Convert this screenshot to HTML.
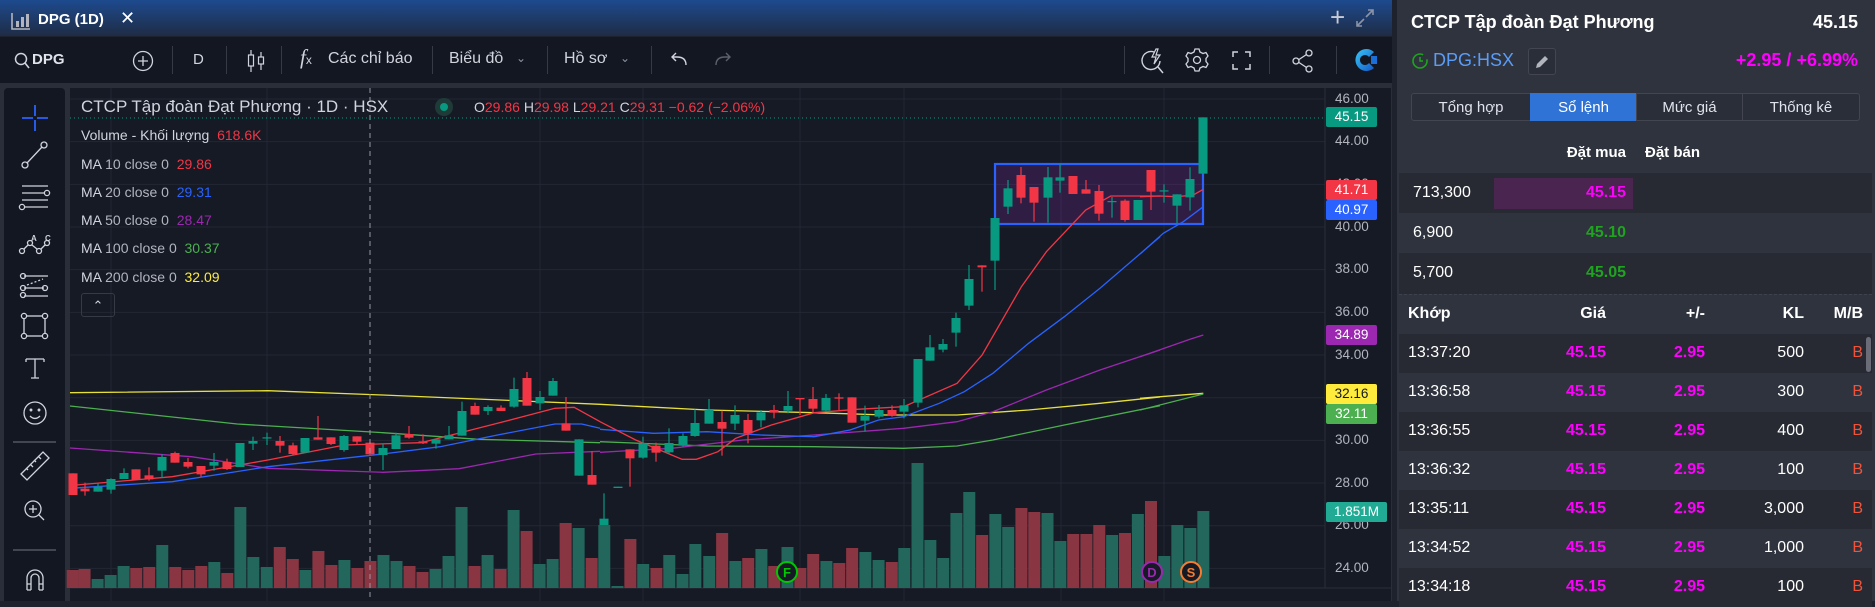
<!DOCTYPE html>
<html><head><meta charset="utf-8">
<style>
*{margin:0;padding:0;box-sizing:border-box}
body{width:1875px;height:601px;overflow:hidden;background:#1e222d;font-family:"Liberation Sans",sans-serif;position:relative;color:#d1d4dc}
.a{position:absolute;white-space:nowrap}
#title{left:0;top:0;width:1392px;height:36px;background:linear-gradient(#1d4a8e,#1f2c45)}
#tb{left:0;top:37px;width:1392px;height:46px;background:#131722}
#gap{left:0;top:83px;width:1392px;height:5px;background:#2a2e39}
#lb{left:4px;top:88px;width:61px;height:513px;background:#131722;border-radius:4px 4px 0 0}
#lbgap{left:0;top:88px;width:70px;height:513px;background:#2a2e39;z-index:-1}
#chart{left:70px;top:88px;width:1322px;height:513px;background:#161a25}
.tt{font-size:16px;color:#d1d4dc}
.div{width:1px;height:28px;background:#363a45;top:46px}
.lg{font-size:14px;color:#b2b5be}
.pl{left:1335px;font-size:13.5px;color:#b2b5be}
.tag{left:1326px;width:51px;height:20px;font-size:13.5px;text-align:center;line-height:20px;color:#fff;border-radius:2px}
#rp{left:1397px;top:0;width:478px;height:601px;background:#2f333d}
.rw{position:absolute;left:1399px;width:473px}
.d{background:#272a33}
.n{font-size:16px;color:#fff}
.b{font-weight:bold}
.mg{color:#f0f;font-weight:bold;font-size:16px}
.gr{color:#1ea51e;font-weight:bold;font-size:16px}
.tab{top:93px;height:28px;line-height:27px;text-align:center;font-size:15px;color:#e0e3eb;border:1px solid #434651;background:#2a2e39}
</style></head><body>
<div class="a" id="title"></div>
<svg class="a" style="left:11px;top:12px" width="20" height="18" viewBox="0 0 20 18"><path d="M1 1v16h18" stroke="#b2b5be" fill="none" stroke-width="1.6"/><rect x="5" y="9" width="3" height="6" fill="#b2b5be"/><rect x="10" y="5" width="3" height="10" fill="#b2b5be"/><rect x="15" y="2" width="3" height="13" fill="#b2b5be"/></svg>
<div class="a b" style="left:38px;top:11px;font-size:15px;color:#fff">DPG (1D)</div>
<div class="a" style="left:120px;top:8px;font-size:18px;color:#fff">✕</div>
<div class="a" style="left:1330px;top:2px;font-size:26px;color:#c7cbd6;font-weight:300">+</div>
<svg class="a" style="left:1356px;top:9px" width="18" height="18" viewBox="0 0 18 18"><path d="M10 8l7-7M12 1h5v5M8 10l-7 7M1 12v5h5" stroke="#8b93a6" stroke-width="1.6" fill="none"/></svg>

<div class="a" id="tb"></div>
<svg class="a" style="left:14px;top:52px" width="16" height="17"><circle cx="7" cy="7" r="5.5" stroke="#d1d4dc" stroke-width="1.5" fill="none"/><path d="M11 11l4 5" stroke="#d1d4dc" stroke-width="1.6"/></svg>
<div class="a b" style="left:32px;top:51px;font-size:15px;color:#e0e3eb">DPG</div>
<svg class="a" style="left:132px;top:50px" width="22" height="22"><circle cx="11" cy="11" r="9.5" stroke="#d1d4dc" stroke-width="1.3" fill="none"/><path d="M11 6v10M6 11h10" stroke="#d1d4dc" stroke-width="1.3"/></svg>
<div class="a div" style="left:172px"></div>
<div class="a" style="left:193px;top:51px;font-size:15px">D</div>
<div class="a div" style="left:226px"></div>
<svg class="a" style="left:246px;top:49px" width="20" height="24"><path d="M5 1v22M15 3v18" stroke="#d1d4dc" stroke-width="1.2"/><rect x="2.5" y="6" width="5" height="11" fill="#131722" stroke="#d1d4dc" stroke-width="1.2"/><rect x="12.5" y="8" width="5" height="7" fill="#131722" stroke="#d1d4dc" stroke-width="1.2"/></svg>
<div class="a div" style="left:281px"></div>
<div class="a" style="left:300px;top:45px;font-size:21px;font-family:'Liberation Serif',serif;font-style:italic">f<span style="font-size:12px;font-style:normal;font-family:'Liberation Sans'">x</span></div>
<div class="a tt" style="left:328px;top:50px">Các chỉ báo</div>
<div class="a div" style="left:432px"></div>
<div class="a tt" style="left:449px;top:50px">Biểu đồ</div>
<div class="a" style="left:516px;top:51px;font-size:12px;color:#8b93a6">⌄</div>
<div class="a div" style="left:547px"></div>
<div class="a tt" style="left:564px;top:50px">Hồ sơ</div>
<div class="a" style="left:620px;top:51px;font-size:12px;color:#8b93a6">⌄</div>
<div class="a div" style="left:651px"></div>
<svg class="a" style="left:670px;top:52px" width="18" height="14"><path d="M16 13c0-6-4-8-9-8H2M6 1L2 5l4 4" stroke="#d1d4dc" stroke-width="1.4" fill="none"/></svg>
<svg class="a" style="left:714px;top:52px" width="18" height="14"><path d="M2 13c0-6 4-8 9-8h5M12 1l4 4-4 4" stroke="#5d606b" stroke-width="1.4" fill="none"/></svg>
<div class="a div" style="left:1124px"></div>
<svg class="a" style="left:1140px;top:47px" width="26" height="28"><path d="M14 5a9 9 0 1 0 6 9" stroke="#d1d4dc" stroke-width="1.4" fill="none"/><path d="M18 20l5 6" stroke="#d1d4dc" stroke-width="1.5"/><path d="M16 2l-4 8h4l-2 7 6-9h-4l2-6z" stroke="#d1d4dc" stroke-width="1.2" fill="none"/></svg>
<svg class="a" style="left:1184px;top:47px" width="26" height="26" viewBox="0 0 26 26"><path d="M11 2h4l1 3 3 1.5 3-1 2 3.5-2 2.5v3l2 2.5-2 3.5-3-1-3 1.5-1 3h-4l-1-3-3-1.5-3 1-2-3.5 2-2.5v-3l-2-2.5 2-3.5 3 1L10 5z" stroke="#d1d4dc" stroke-width="1.3" fill="none"/><circle cx="13" cy="13" r="3.5" stroke="#d1d4dc" stroke-width="1.3" fill="none"/></svg>
<svg class="a" style="left:1232px;top:51px" width="19" height="19"><path d="M1 6V1h5M13 1h5v5M18 13v5h-5M6 18H1v-5" stroke="#d1d4dc" stroke-width="1.5" fill="none"/></svg>
<div class="a div" style="left:1269px"></div>
<svg class="a" style="left:1292px;top:49px" width="22" height="24"><circle cx="17" cy="4" r="3" stroke="#d1d4dc" stroke-width="1.3" fill="none"/><circle cx="4" cy="12" r="3" stroke="#d1d4dc" stroke-width="1.3" fill="none"/><circle cx="17" cy="20" r="3" stroke="#d1d4dc" stroke-width="1.3" fill="none"/><path d="M7 10.5l7.5-5M7 13.5l7.5 5" stroke="#d1d4dc" stroke-width="1.3"/></svg>
<div class="a div" style="left:1336px"></div>
<svg class="a" style="left:1354px;top:47px" width="26" height="26"><defs><linearGradient id="lg1" x1="0" y1="0" x2="1" y2="1"><stop offset="0" stop-color="#39c7f5"/><stop offset="1" stop-color="#1458c9"/></linearGradient></defs><path d="M20 5A11 11 0 1 0 20 21L15 16A5 5 0 1 1 15 10z" fill="url(#lg1)"/><path d="M17 9h6v8h-6z" fill="#1b6fd6"/></svg>
<div class="a" id="gap"></div>

<div class="a" id="lbgap"></div>
<div class="a" id="lb"></div>
<svg class="a" style="left:0;top:88px" width="70" height="513">
<g stroke="#d1d4dc" stroke-width="1.3" fill="none">
<path d="M35 17v11M35 32v11M22 30h11M37 30h11" stroke="#2962ff" stroke-width="1.8"/>
<circle cx="44" cy="57" r="3"/><circle cx="25" cy="77" r="3"/><path d="M27 75l15-16"/>
<path d="M22 98h26M22 105h22M22 112h26M24 119h24"/><circle cx="47" cy="105" r="2.6"/><circle cx="22" cy="119" r="2.6"/>
<circle cx="22" cy="163" r="2.5"/><circle cx="30" cy="155" r="2.5"/><circle cx="39" cy="163" r="2.5"/><circle cx="47" cy="155" r="2.5"/><path d="M24 161l4-4M32 157l5 4M41 161l4-4"/>
<path d="M24 188h24M24 200h20M24 208h24"/><path d="M27 197l16-6" stroke-dasharray="2 2"/><circle cx="23" cy="188" r="2.5"/><circle cx="23" cy="200" r="2.5"/><circle cx="45" cy="200" r="2.5"/><circle cx="23" cy="207" r="2.5"/>
<rect x="24" y="228" width="21" height="20"/><circle cx="24" cy="228" r="2.6" fill="#131722"/><circle cx="45" cy="228" r="2.6" fill="#131722"/><circle cx="24" cy="248" r="2.6" fill="#131722"/><circle cx="45" cy="248" r="2.6" fill="#131722"/>
<path d="M26 271h18M35 271v19M31 290h8M26 271v3M44 271v3"/>
<circle cx="35" cy="325" r="11"/><path d="M30 328q5 5 10 0"/><circle cx="31" cy="322" r=".8"/><circle cx="39" cy="322" r=".8"/>
<path d="M13 354h43" stroke="#434651" stroke-width="2"/>
<path d="M21 386l22-22 6 6-22 22z M26 380l2 2M30 376l3 3M34 372l2 2M38 368l3 3"/>
<circle cx="33" cy="421" r="8"/><path d="M39 427l5 5M33 417v8M29 421h8"/>
<path d="M13 462h43" stroke="#434651" stroke-width="2"/>
<path d="M27 502v-12a8 8 0 0 1 16 0v12M31 502v-12a4 4 0 0 1 8 0v12M27 496h4M39 496h4M27 502h4M39 502h4"/>
<text x="31" y="153" fill="#d1d4dc" stroke="none" font-size="8" font-weight="bold" font-family="Liberation Sans">A</text><text x="45" y="153" fill="#d1d4dc" stroke="none" font-size="8" font-weight="bold" font-family="Liberation Sans">C</text>
</g></svg>

<div class="a" id="chart"></div>
<svg class="a" id="cs" style="left:0;top:0" width="1392" height="601"></svg>

<div class="a" style="left:81px;top:97px;font-size:17px;color:#d1d4dc">CTCP Tập đoàn Đạt Phương · 1D · HSX</div>
<div class="a" style="left:435px;top:98px;width:18px;height:18px;border-radius:9px;background:#1f3b38"></div>
<div class="a" style="left:440px;top:103px;width:8px;height:8px;border-radius:4px;background:#089981"></div>
<div class="a" style="left:474px;top:99px;font-size:14px;color:#d1d4dc">O<span style="color:#f23645">29.86</span> H<span style="color:#f23645">29.98</span> L<span style="color:#f23645">29.21</span> C<span style="color:#f23645">29.31</span> <span style="color:#f23645">−0.62 (−2.06%)</span></div>
<div class="a lg" style="left:81px;top:127px;color:#d1d4dc">Volume - Khối lượng <span style="color:#f23645">&nbsp;618.6K</span></div>
<div class="a lg" style="left:81px;top:156px"><span style="color:#d1d4dc">MA</span> 10 close 0 &nbsp;<span style="color:#f23645">29.86</span></div>
<div class="a lg" style="left:81px;top:184px"><span style="color:#d1d4dc">MA</span> 20 close 0 &nbsp;<span style="color:#2962ff">29.31</span></div>
<div class="a lg" style="left:81px;top:212px"><span style="color:#d1d4dc">MA</span> 50 close 0 &nbsp;<span style="color:#9c27b0">28.47</span></div>
<div class="a lg" style="left:81px;top:240px"><span style="color:#d1d4dc">MA</span> 100 close 0 &nbsp;<span style="color:#4caf50">30.37</span></div>
<div class="a lg" style="left:81px;top:269px"><span style="color:#d1d4dc">MA</span> 200 close 0 &nbsp;<span style="color:#ffeb3b">32.09</span></div>
<div class="a" style="left:81px;top:293px;width:34px;height:24px;border:1px solid #363a45;border-radius:3px;text-align:center;font-size:13px;line-height:24px;color:#d1d4dc">⌃</div>

<div class="a pl" style="top:91px">46.00</div>
<div class="a pl" style="top:133px">44.00</div>
<div class="a pl" style="top:176px">42.00</div>
<div class="a pl" style="top:219px">40.00</div>
<div class="a pl" style="top:261px">38.00</div>
<div class="a pl" style="top:304px">36.00</div>
<div class="a pl" style="top:347px">34.00</div>
<div class="a pl" style="top:389px">32.00</div>
<div class="a pl" style="top:432px">30.00</div>
<div class="a pl" style="top:475px">28.00</div>
<div class="a pl" style="top:517px">26.00</div>
<div class="a pl" style="top:560px">24.00</div>
<div class="a tag" style="top:107px;background:#089981">45.15</div>
<div class="a tag" style="top:180px;background:#f23645">41.71</div>
<div class="a tag" style="top:200px;background:#2962ff">40.97</div>
<div class="a tag" style="top:325px;background:#9c27b0">34.89</div>
<div class="a tag" style="top:384px;background:#ffeb3b;color:#131722">32.16</div>
<div class="a tag" style="top:404px;background:#4caf50">32.11</div>
<div class="a tag" style="top:502px;width:61px;background:#22ab94">1.851M</div>

<div class="a" id="rp"></div>
<div class="a b" style="left:1411px;top:12px;font-size:18px;color:#fff">CTCP Tập đoàn Đạt Phương</div>
<div class="a b" style="left:1800px;top:12px;width:58px;text-align:right;font-size:18px;color:#fff">45.15</div>
<svg class="a" style="left:1411px;top:51px" width="18" height="20"><circle cx="9" cy="10" r="7" stroke="#1ea51e" stroke-width="1.6" fill="none" stroke-dasharray="36 6"/><path d="M9 6v4h3" stroke="#1ea51e" stroke-width="1.5" fill="none"/></svg>
<div class="a" style="left:1433px;top:50px;font-size:18px;color:#5b9cf6">DPG:HSX</div>
<div class="a" style="left:1528px;top:48px;width:28px;height:27px;border:1px solid #434651;border-radius:3px;background:#2a2e39"></div>
<svg class="a" style="left:1534px;top:54px" width="16" height="16"><path d="M2 14l1-4 8-8 3 3-8 8z" fill="#b2b5be"/></svg>
<div class="a b" style="left:1680px;top:50px;width:178px;text-align:right;font-size:18px;color:#f0f">+2.95 / +6.99%</div>
<div class="a tab" style="left:1411px;width:120px;border-radius:3px 0 0 3px">Tổng hợp</div>
<div class="a tab" style="left:1530px;width:107px;background:#2f73d6;border-color:#2f73d6;color:#fff">Sổ lệnh</div>
<div class="a tab" style="left:1636px;width:107px">Mức giá</div>
<div class="a tab" style="left:1742px;width:118px;border-radius:0 3px 3px 0">Thống kê</div>
<div class="a b" style="left:1500px;top:144px;width:126px;text-align:right;font-size:15px;color:#fff">Đặt mua</div>
<div class="a b" style="left:1645px;top:144px;font-size:15px;color:#fff">Đặt bán</div>
<div class="rw d" style="top:173px;height:40px"></div>
<div class="rw" style="top:213px;height:40px"></div>
<div class="rw d" style="top:253px;height:41px"></div>
<div class="a" style="left:1494px;top:178px;width:139px;height:31px;background:#4a2550"></div>
<div class="a n" style="left:1413px;top:184px">713,300</div><div class="a mg" style="left:1540px;top:184px;width:86px;text-align:right">45.15</div>
<div class="a n" style="left:1413px;top:224px">6,900</div><div class="a gr" style="left:1540px;top:224px;width:86px;text-align:right">45.10</div>
<div class="a n" style="left:1413px;top:264px">5,700</div><div class="a gr" style="left:1540px;top:264px;width:86px;text-align:right">45.05</div>
<div class="a" style="left:1399px;top:294px;width:473px;border-top:1px dashed #3e424d"></div>
<div class="a b" style="left:1408px;top:305px;font-size:16px;color:#fff">Khớp</div>
<div class="a b" style="left:1540px;top:305px;width:66px;text-align:right;font-size:16px;color:#fff">Giá</div>
<div class="a b" style="left:1640px;top:305px;width:65px;text-align:right;font-size:16px;color:#fff">+/-</div>
<div class="a b" style="left:1740px;top:305px;width:64px;text-align:right;font-size:16px;color:#fff">KL</div>
<div class="a b" style="left:1820px;top:305px;width:43px;text-align:right;font-size:16px;color:#fff">M/B</div>
<div id="trades"></div>
<div class="a" style="left:1866px;top:337px;width:5px;height:35px;border-radius:3px;background:#6a6d78"></div>

<script>
var NS="http://www.w3.org/2000/svg",svg=document.getElementById('cs');
function el(t,a){var e=document.createElementNS(NS,t);for(var k in a)e.setAttribute(k,a[k]);svg.appendChild(e);return e}
// grid
for(var i=0;i<12;i++){var y=99+i*42.67;el('line',{x1:70,x2:1325,y1:y,y2:y,stroke:'#232734','stroke-width':1})}
[111,267,540,643,800,904,1061,1164].forEach(function(x){el('line',{x1:x,x2:x,y1:88,y2:601,stroke:'#232734'})});
el('line',{x1:1325,x2:1325,y1:88,y2:588,stroke:'#2a2e39'});
el('line',{x1:70,x2:1392,y1:588,y2:588,stroke:'#2a2e39'});
el('line',{x1:1392,x2:1392,y1:88,y2:601,stroke:'#2a2e39','stroke-width':2});
function T5(p){return [p[0]/2.613,250+p[1]/3]}
function T6(p){return [600+p[0]/2.8,120+p[1]/3]}
function T7(p){return [1140+p[0]/3,90+p[1]/3]}
// box
el('rect',{x:995,y:164,width:208,height:60,fill:'rgba(120,40,150,0.28)',stroke:'#2962ff','stroke-width':2.2});
var V5=[[190,960,'r'],[221,957,'r'],[255,987,'g'],[289,975,'g'],[323,948,'g'],[356,954,'r'],[390,951,'r'],[424,885,'g'],[458,951,'r'],[492,960,'r'],[526,948,'r'],[560,936,'g'],[594,969,'r'],[628,771,'g'],[662,921,'g'],[697,951,'g'],[731,891,'r'],[765,927,'r'],[798,960,'g'],[832,903,'r'],[866,945,'r'],[900,930,'g'],[934,954,'r'],[968,933,'r'],[1002,915,'g'],[1036,933,'g'],[1070,948,'r'],[1104,966,'r'],[1138,957,'g'],[1172,918,'g'],[1206,771,'g'],[1240,948,'r'],[1274,915,'g'],[1308,957,'r'],[1342,780,'g'],[1376,843,'r'],[1410,942,'g'],[1444,927,'g'],[1478,819,'r'],[1512,834,'g'],[1546,924,'r']];
var V6=[[12,1215,'g'],[49,1398,'g'],[85,1257,'r'],[121,1332,'g'],[158,1344,'r'],[194,1305,'g'],[231,1362,'g'],[267,1272,'g'],[306,1308,'g'],[342,1239,'r'],[379,1323,'g'],[415,1314,'r'],[452,1287,'g'],[488,1338,'r'],[525,1281,'g'],[561,1344,'r'],[597,1302,'r'],[634,1323,'g'],[670,1329,'r'],[706,1284,'r'],[743,1296,'g'],[780,1320,'g'],[817,1326,'r'],[852,1284,'g'],[889,1029,'g'],[925,1260,'g'],[961,1314,'g'],[998,1179,'g'],[1034,1116,'g'],[1070,1245,'r'],[1107,1182,'g'],[1143,1221,'g'],[1180,1164,'r'],[1216,1176,'r'],[1253,1179,'g'],[1289,1263,'g'],[1325,1242,'r'],[1362,1242,'r'],[1398,1215,'r'],[1434,1245,'g'],[1470,1239,'r'],[1506,1182,'g']];
var V7=[[33,1233,'r'],[73,1398,'g'],[112,1305,'g'],[151,1314,'g'],[190,1263,'g']];
function vol(arr,T){arr.forEach(function(v){var p=T([v[0],v[1]]);var top=Math.max(p[1],0);el('rect',{x:p[0]-6,y:top,width:12,height:588-top,fill:v[2]=='g'?'#22665c':'#8a3642'})})}
vol(V5,T5);vol(V6,T6);vol(V7,T7);
// MAs
function line(pts,T,c){var d=pts.map(function(p,i){var q=T(p);return (i?'L':'M')+q[0].toFixed(1)+' '+q[1].toFixed(1)}).join('');el('path',{d:d,stroke:c,fill:'none','stroke-width':1.3})}
var Y='#e8e03a',G='#4caf50',P='#9c27b0',B='#2962ff',R='#f23645';
line([[183,428],[700,422],[1000,435],[1568,463]],T5,Y);line([[0,853],[300,870],[600,878],[800,885],[1000,885],[1200,870],[1400,850],[1568,831]],T6,Y);line([[0,925],[190,910]],T7,Y);
line([[183,468],[620,522],[1000,548],[1250,568],[1568,578]],T5,G);line([[0,965],[300,978],[600,980],[850,985],[1000,978],[1100,960],[1300,915],[1568,857]],T6,G);line([[0,960],[190,912]],T7,G);
line([[183,594],[500,620],[700,655],[1000,667],[1200,656],[1400,612],[1568,604]],T5,P);line([[0,997],[200,985],[400,960],[600,945],[850,925],[1000,905],[1100,875],[1250,810],[1400,750],[1568,690]],T6,P);line([[0,800],[150,748],[190,735]],T7,P);
line([[183,715],[450,695],[700,650],[1000,612],[1150,590],[1300,555],[1450,522],[1520,522],[1568,535]],T5,B);line([[0,928],[150,940],[300,935],[450,945],[600,950],[700,930],[780,900],[850,890],[950,850],[1020,815],[1100,760],[1200,670],[1300,590],[1400,505],[1568,350]],T6,B);line([[0,492],[70,430],[130,395],[190,350]],T7,B);
line([[200,705],[450,680],[700,630],[900,585],[1100,578],[1300,520],[1450,475],[1500,472],[1568,515]],T5,R);line([[0,905],[100,960],[230,1018],[270,1018],[330,995],[380,955],[480,915],[600,878],[720,868],[850,860],[1000,790],[1070,705],[1180,500],[1250,395],[1360,270],[1430,228],[1568,228]],T6,R);line([[0,320],[60,318],[110,320],[160,315],[190,298]],T7,R);
// candles [zx, bodyTop, bodyBot, wickTop, wickBot, c]
var C5=[[190,670,735,670,735,'r'],[221,716,724,698,737,'r'],[255,710,725,700,725,'g'],[289,687,719,685,731,'g'],[323,669,687,655,687,'g'],[356,658,689,658,689,'r'],[390,676,688,652,692,'r'],[424,621,662,612,682,'g'],[458,609,638,605,638,'r'],[492,636,650,624,655,'r'],[526,648,673,648,680,'r'],[560,636,647,609,662,'g'],[594,636,657,626,660,'r'],[628,579,651,579,651,'g'],[662,573,581,560,600,'g'],[697,562,565,548,585,'g'],[731,573,587,558,608,'r'],[765,586,612,578,615,'r'],[798,564,608,564,608,'g'],[832,562,569,498,569,'r'],[866,562,582,562,585,'r'],[900,558,600,555,605,'g'],[934,559,575,559,584,'r'],[968,578,613,575,615,'r'],[1002,594,615,582,660,'g'],[1036,556,597,548,597,'g'],[1070,552,563,528,566,'r'],[1104,574,580,553,582,'r'],[1138,568,581,566,596,'g'],[1172,556,568,528,568,'g'],[1206,483,557,455,557,'g'],[1240,468,494,458,494,'r'],[1274,471,483,466,495,'g'],[1308,473,483,466,483,'r'],[1342,417,470,383,473,'g'],[1376,384,467,366,467,'r'],[1410,441,460,423,480,'g'],[1444,393,437,384,437,'g'],[1478,520,542,441,542,'r'],[1512,568,677,568,677,'g'],[1546,675,704,603,704,'r']];
var C6=[[12,1196,1215,1120,1215,'g'],[49,1100,1104,1100,1104,'g'],[85,988,1015,988,1100,'r'],[121,970,1013,950,1016,'g'],[158,977,998,968,1025,'r'],[194,969,997,925,1000,'g'],[231,948,977,940,980,'g'],[267,909,948,868,950,'g'],[306,870,911,837,911,'g'],[342,906,926,872,1007,'r'],[379,885,911,856,930,'g'],[415,900,940,882,970,'r'],[452,877,901,870,922,'g'],[488,870,878,855,895,'r'],[525,858,872,813,880,'g'],[561,834,838,834,885,'r'],[597,837,866,801,880,'r'],[634,834,872,822,874,'g'],[670,832,836,820,870,'r'],[706,832,908,832,908,'r'],[743,887,902,857,935,'g'],[780,870,890,855,895,'g'],[817,870,886,856,890,'r'],[852,856,875,837,895,'g'],[889,717,848,717,862,'g'],[925,682,722,645,722,'g'],[961,672,689,657,697,'g'],[998,594,638,578,680,'g'],[1034,477,557,435,570,'g'],[1070,436,442,436,515,'r'],[1107,294,422,294,510,'g'],[1143,205,260,180,282,'g'],[1180,165,233,141,250,'r'],[1216,201,248,201,305,'r'],[1253,172,233,141,308,'g'],[1289,172,182,131,218,'g'],[1325,168,222,168,222,'r'],[1362,208,221,180,221,'r'],[1398,213,281,195,302,'r'],[1434,243,245,231,293,'g'],[1470,242,300,238,305,'r'],[1506,240,300,240,300,'g']];
var C7=[[33,240,305,240,360,'r'],[73,301,304,283,338,'g'],[112,313,347,313,400,'g'],[151,267,322,232,362,'g'],[190,82,251,82,251,'g']];
function cand(arr,T){arr.forEach(function(c){var a=T([c[0],c[1]]),b=T([c[0],c[2]]),w1=T([c[0],c[3]]),w2=T([c[0],c[4]]);var col=c[5]=='g'?'#089981':'#f23645';var x=Math.round(a[0]);el('rect',{x:x-0.6,y:w1[1],width:1.2,height:Math.max(w2[1]-w1[1],1),fill:col});el('rect',{x:x-4.5,y:a[1],width:9,height:Math.max(b[1]-a[1],1.2),fill:col})})}
cand(C5,T5);cand(C6,T6);cand(C7,T7);
// crosshair & dotted last price line
el('line',{x1:370,x2:370,y1:88,y2:601,stroke:'#9598a1','stroke-dasharray':'5 4'});
el('line',{x1:70,x2:1325,y1:118,y2:118,stroke:'#089981','stroke-dasharray':'1 3'});
// markers
function mk(x,c,t){el('circle',{cx:x,cy:572,r:10,fill:'#161a25',stroke:c,'stroke-width':2});var tx=el('text',{x:x,y:577,'text-anchor':'middle','font-size':13,'font-weight':'bold',fill:c,'font-family':'Liberation Sans'});tx.textContent=t}
mk(787,'#00c800','F');mk(1152,'#9c27b0','D');mk(1191,'#f57c30','S');
// trades
var tr=[['13:37:20','500'],['13:36:58','300'],['13:36:55','400'],['13:36:32','100'],['13:35:11','3,000'],['13:34:52','1,000'],['13:34:18','100']],h='';
tr.forEach(function(r,i){var y=334+i*39;h+='<div class="rw'+(i%2==0?' d':'')+'" style="top:'+y+'px;height:39px"></div><div class="a n" style="left:1408px;top:'+(y+10)+'px">'+r[0]+'</div><div class="a mg" style="left:1540px;top:'+(y+10)+'px;width:66px;text-align:right">45.15</div><div class="a mg" style="left:1640px;top:'+(y+10)+'px;width:65px;text-align:right">2.95</div><div class="a n" style="left:1740px;top:'+(y+10)+'px;width:64px;text-align:right">'+r[1]+'</div><div class="a n" style="left:1840px;top:'+(y+10)+'px;width:23px;text-align:right;color:#f0533a">B</div>'});
document.getElementById('trades').innerHTML=h;
</script>
</body></html>
